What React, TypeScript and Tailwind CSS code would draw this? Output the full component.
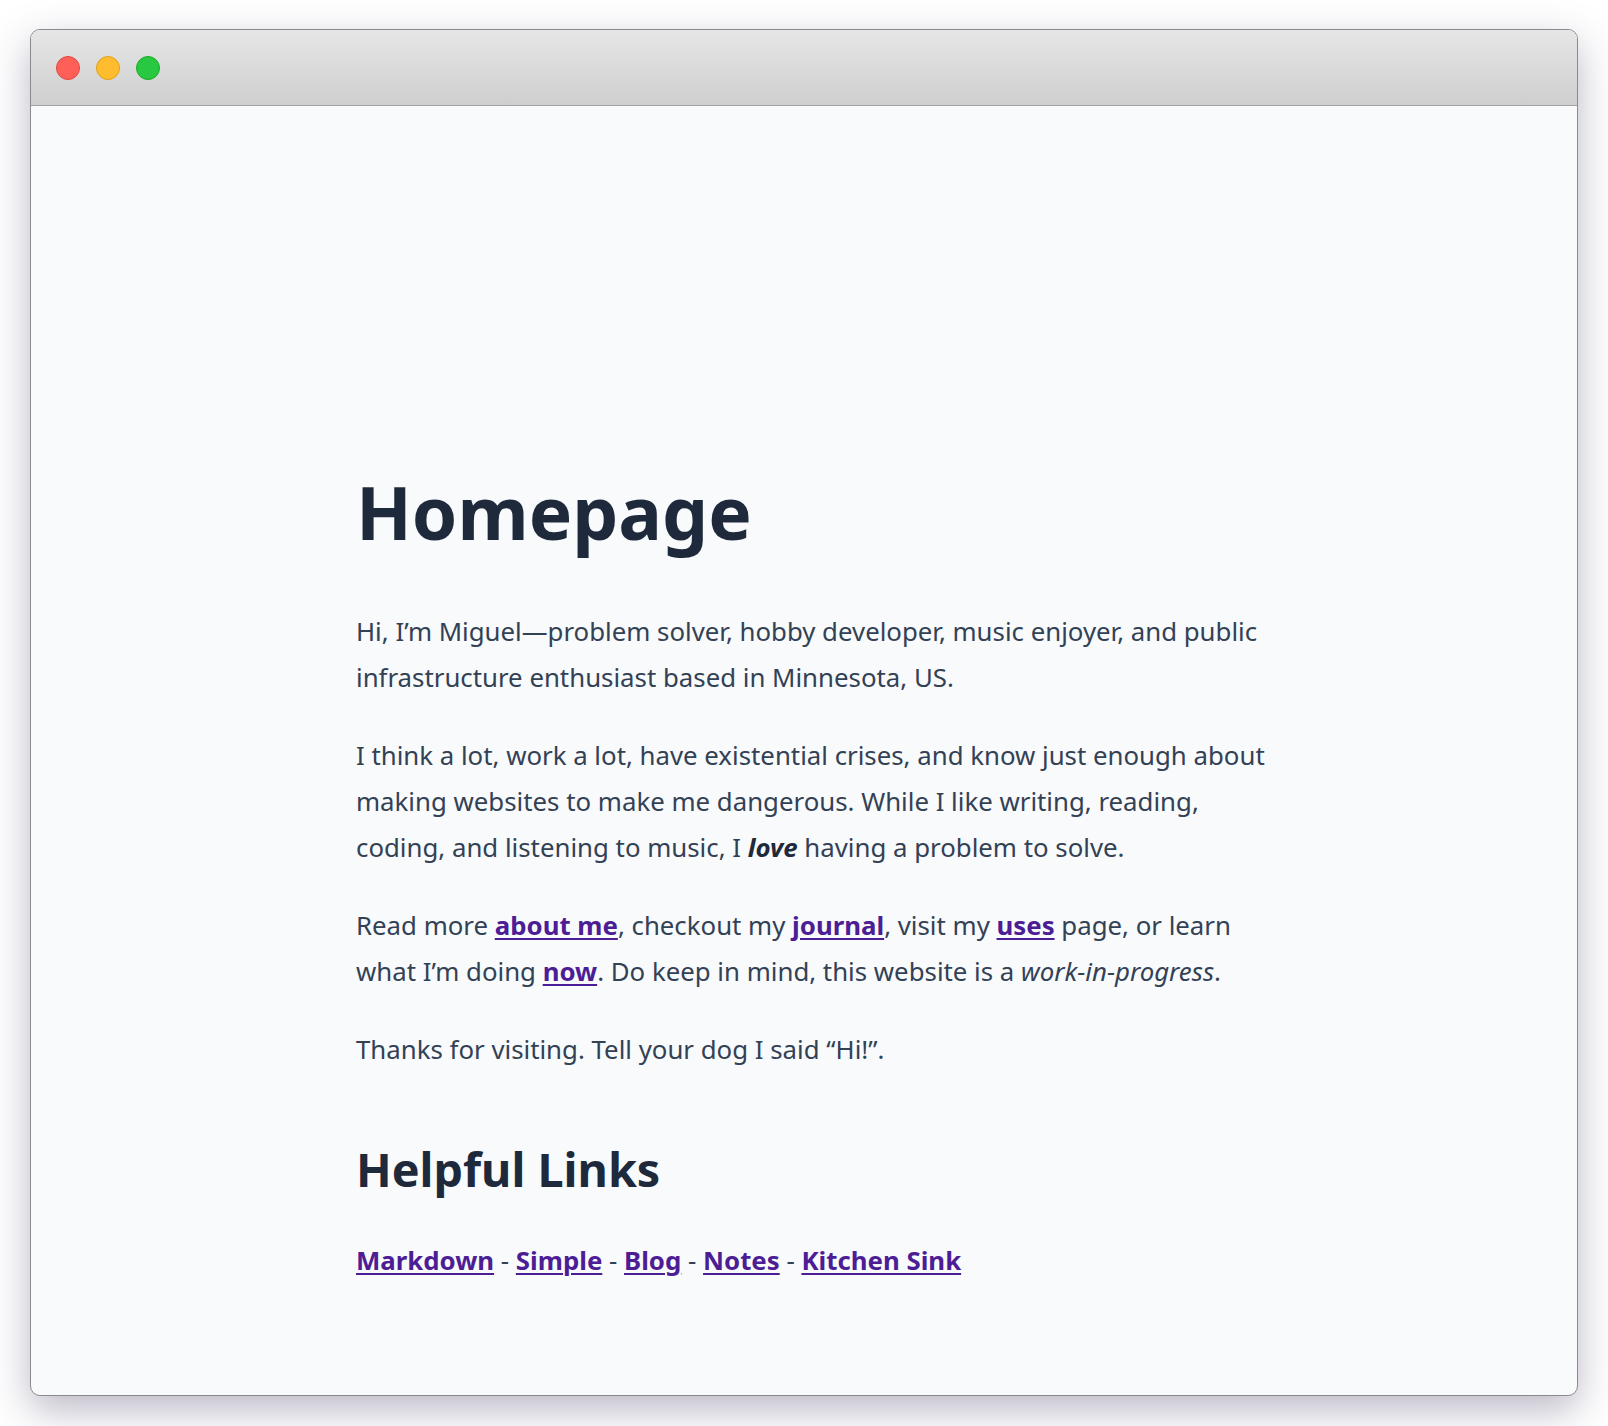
import React from "react";

const linkCls = "font-bold text-[#4c1d95] underline decoration-2 underline-offset-[3px]";

export default function App() {
  return (
    <div className="w-[1608px] h-[1426px] bg-white pt-[29px] pl-[30px]" style={{ fontFamily: '"Noto Sans", sans-serif' }}>
      <div className="w-[1548px] h-[1367px] rounded-[10px] overflow-hidden border border-[#8a8a8e] shadow-[0_14px_40px_rgba(60,50,90,0.35)] flex flex-col bg-[#f8fafc]">
        <div className="h-[76px] shrink-0 bg-gradient-to-b from-[#e6e6e6] to-[#cfcfcf] border-b border-[#a3a3a3] flex items-center gap-4 pl-[25px]">
          <div className="w-6 h-6 rounded-full bg-[#fe5f57] border border-[#e2463f]" />
          <div className="w-6 h-6 rounded-full bg-[#febc2e] border border-[#e1a116]" />
          <div className="w-6 h-6 rounded-full bg-[#28c840] border border-[#1aab29]" />
        </div>
        <div className="flex-1">
          <div className="w-[922px] ml-[325px] pt-[363px] text-[#1e293b]">
            <h1 className="text-[73px] leading-[86px] font-bold text-[#1e293b] mb-[53px]">Homepage</h1>
            <div className="text-[25.8px] leading-[46px] text-[#334155]">
              <p className="mb-8">
                Hi, I’m Miguel—problem solver, hobby developer, music enjoyer, and public infrastructure enthusiast based in Minnesota, US.
              </p>
              <p className="mb-8">
                I think a lot, work a lot, have existential crises, and know just enough about making websites to make me dangerous. While I like writing, reading, coding, and listening to music, I <em className="font-bold text-[#1e293b]">love</em> having a problem to solve.
              </p>
              <p className="mb-8">
                Read more <a className={linkCls}>about me</a>, checkout my <a className={linkCls}>journal</a>, visit my <a className={linkCls}>uses</a> page, or learn what I’m doing <a className={linkCls}>now</a>. Do keep in mind, this website is a <em>work-in-progress</em>.
              </p>
              <p>Thanks for visiting. Tell your dog I said “Hi!”.</p>
            </div>
            <h2 className="text-[46.7px] leading-[55px] font-bold text-[#1e293b] mt-[70px] mb-[40px]">Helpful Links</h2>
            <p className="text-[25.8px] leading-[46px] text-[#334155]">
              <a className={linkCls}>Markdown</a> - <a className={linkCls}>Simple</a> - <a className={linkCls}>Blog</a> - <a className={linkCls}>Notes</a> - <a className={linkCls}>Kitchen Sink</a>
            </p>
          </div>
        </div>
      </div>
    </div>
  );
}
